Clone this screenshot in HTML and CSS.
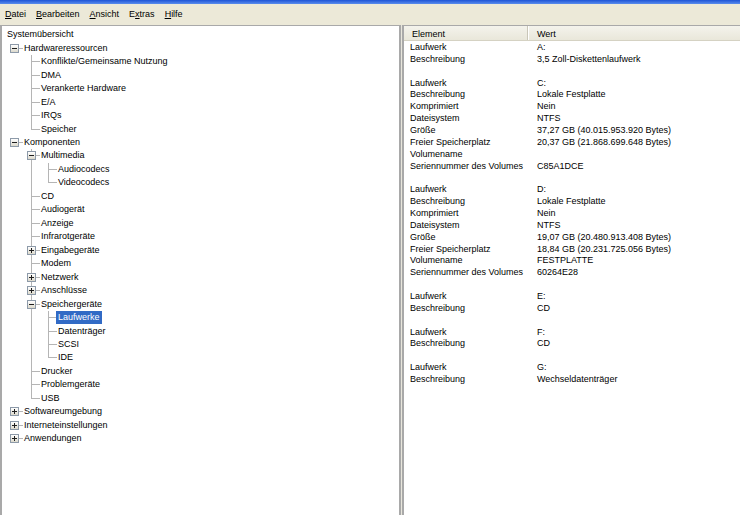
FILE: index.html
```html
<!DOCTYPE html>
<html lang="de">
<head>
<meta charset="utf-8">
<title>Systeminformationen</title>
<link rel="stylesheet" href="styles.css">
</head>
<body>
<div class="titlebar"></div>
<div class="menubar">
  <span class="mi"><u>D</u>atei</span>
  <span class="mi"><u>B</u>earbeiten</span>
  <span class="mi"><u>A</u>nsicht</span>
  <span class="mi">E<u>x</u>tras</span>
  <span class="mi"><u>H</u>ilfe</span>
</div>
<div class="main">
  <div class="tree">
    <div class="row root"><span class="label">Systemübersicht</span></div>
    <div class="row"><span class="g box"><i class="btn minus"></i></span><span class="label">Hardwareressourcen</span></div>
    <div class="row"><span class="g"></span><span class="g t"></span><span class="label">Konflikte/Gemeinsame Nutzung</span></div>
    <div class="row"><span class="g"></span><span class="g t"></span><span class="label">DMA</span></div>
    <div class="row"><span class="g"></span><span class="g t"></span><span class="label">Verankerte Hardware</span></div>
    <div class="row"><span class="g"></span><span class="g t"></span><span class="label">E/A</span></div>
    <div class="row"><span class="g"></span><span class="g t"></span><span class="label">IRQs</span></div>
    <div class="row"><span class="g"></span><span class="g l"></span><span class="label">Speicher</span></div>
    <div class="row"><span class="g box"><i class="btn minus"></i></span><span class="label">Komponenten</span></div>
    <div class="row"><span class="g"></span><span class="g t box"><i class="btn minus"></i></span><span class="label">Multimedia</span></div>
    <div class="row"><span class="g"></span><span class="g v"></span><span class="g t"></span><span class="label">Audiocodecs</span></div>
    <div class="row"><span class="g"></span><span class="g v"></span><span class="g l"></span><span class="label">Videocodecs</span></div>
    <div class="row"><span class="g"></span><span class="g t"></span><span class="label">CD</span></div>
    <div class="row"><span class="g"></span><span class="g t"></span><span class="label">Audiogerät</span></div>
    <div class="row"><span class="g"></span><span class="g t"></span><span class="label">Anzeige</span></div>
    <div class="row"><span class="g"></span><span class="g t"></span><span class="label">Infrarotgeräte</span></div>
    <div class="row"><span class="g"></span><span class="g t box"><i class="btn plus"></i></span><span class="label">Eingabegeräte</span></div>
    <div class="row"><span class="g"></span><span class="g t"></span><span class="label">Modem</span></div>
    <div class="row"><span class="g"></span><span class="g t box"><i class="btn plus"></i></span><span class="label">Netzwerk</span></div>
    <div class="row"><span class="g"></span><span class="g t box"><i class="btn plus"></i></span><span class="label">Anschlüsse</span></div>
    <div class="row"><span class="g"></span><span class="g t box"><i class="btn minus"></i></span><span class="label">Speichergeräte</span></div>
    <div class="row"><span class="g"></span><span class="g v"></span><span class="g t"></span><span class="label selected">Laufwerke</span></div>
    <div class="row"><span class="g"></span><span class="g v"></span><span class="g t"></span><span class="label">Datenträger</span></div>
    <div class="row"><span class="g"></span><span class="g v"></span><span class="g t"></span><span class="label">SCSI</span></div>
    <div class="row"><span class="g"></span><span class="g v"></span><span class="g l"></span><span class="label">IDE</span></div>
    <div class="row"><span class="g"></span><span class="g t"></span><span class="label">Drucker</span></div>
    <div class="row"><span class="g"></span><span class="g t"></span><span class="label">Problemgeräte</span></div>
    <div class="row"><span class="g"></span><span class="g l"></span><span class="label">USB</span></div>
    <div class="row"><span class="g box"><i class="btn plus"></i></span><span class="label">Softwareumgebung</span></div>
    <div class="row"><span class="g box"><i class="btn plus"></i></span><span class="label">Interneteinstellungen</span></div>
    <div class="row"><span class="g box"><i class="btn plus"></i></span><span class="label">Anwendungen</span></div>
  </div>
  <div class="split"></div>
  <div class="list">
    <div class="head"><div class="hc c1">Element</div><div class="hc c2">Wert</div></div>
    <div class="rows">
      <div class="r"><span>Laufwerk</span><span>A:</span></div>
      <div class="r"><span>Beschreibung</span><span>3,5 Zoll-Diskettenlaufwerk</span></div>
      <div class="r"></div>
      <div class="r"><span>Laufwerk</span><span>C:</span></div>
      <div class="r"><span>Beschreibung</span><span>Lokale Festplatte</span></div>
      <div class="r"><span>Komprimiert</span><span>Nein</span></div>
      <div class="r"><span>Dateisystem</span><span>NTFS</span></div>
      <div class="r"><span>Größe</span><span>37,27 GB (40.015.953.920 Bytes)</span></div>
      <div class="r"><span>Freier Speicherplatz</span><span>20,37 GB (21.868.699.648 Bytes)</span></div>
      <div class="r"><span>Volumename</span><span></span></div>
      <div class="r"><span>Seriennummer des Volumes</span><span>C85A1DCE</span></div>
      <div class="r"></div>
      <div class="r"><span>Laufwerk</span><span>D:</span></div>
      <div class="r"><span>Beschreibung</span><span>Lokale Festplatte</span></div>
      <div class="r"><span>Komprimiert</span><span>Nein</span></div>
      <div class="r"><span>Dateisystem</span><span>NTFS</span></div>
      <div class="r"><span>Größe</span><span>19,07 GB (20.480.913.408 Bytes)</span></div>
      <div class="r"><span>Freier Speicherplatz</span><span>18,84 GB (20.231.725.056 Bytes)</span></div>
      <div class="r"><span>Volumename</span><span>FESTPLATTE</span></div>
      <div class="r"><span>Seriennummer des Volumes</span><span>60264E28</span></div>
      <div class="r"></div>
      <div class="r"><span>Laufwerk</span><span>E:</span></div>
      <div class="r"><span>Beschreibung</span><span>CD</span></div>
      <div class="r"></div>
      <div class="r"><span>Laufwerk</span><span>F:</span></div>
      <div class="r"><span>Beschreibung</span><span>CD</span></div>
      <div class="r"></div>
      <div class="r"><span>Laufwerk</span><span>G:</span></div>
      <div class="r"><span>Beschreibung</span><span>Wechseldatenträger</span></div>
    </div>
  </div>
</div>
</body>
</html>
```
FILE: styles.css
```css
* { box-sizing: border-box; }
html, body { margin: 0; padding: 0; }
body {
  width: 740px;
  height: 515px;
  overflow: hidden;
  background: #ece9d8;
  font-family: "Liberation Sans", Arial, sans-serif;
  font-size: 9px;
  color: #000;
}
.titlebar {
  height: 4px;
  background: linear-gradient(#1d54d6, #5a8ded);
}
.menubar {
  height: 21px;
  display: flex;
  align-items: center;
  gap: 10px;
  padding-left: 5px;
  padding-bottom: 1px;
  background: #ece9d8;
}
.mi u { text-decoration: underline; text-underline-offset: 1px; }
.main {
  display: flex;
  height: 490px;
}
.tree {
  width: 401px;
  flex: none;
  background: #fff;
  border-left: 2px solid #a9a9a9;
  border-top: 1px solid #a9a9a9;
  border-right: 2px solid #a9a9a9;
  padding-left: 4px;
  padding-top: 2px;
}
.split {
  width: 1px;
  flex: none;
  background: #e8e6dc;
}
.list {
  flex: 1;
  background: #fff;
  border-left: 2px solid #a9a9a9;
  border-top: 1px solid #a9a9a9;
}
.row {
  display: flex;
  align-items: center;
  height: 13.47px;
  white-space: nowrap;
}
.label {
  margin-left: -1px;
  padding: 0 2px;
  line-height: 13px;
  height: 13px;
}
.label.selected {
  background: #316ac5;
  color: #fff;
}
.g {
  --ln: #b5b5b5;
  flex: none;
  width: 17px;
  height: 100%;
  display: flex;
  align-items: center;
  padding-left: 4px;
}
.g.v {
  background: linear-gradient(var(--ln), var(--ln)) 8px 0 / 1px 100% no-repeat;
}
.g.t {
  background:
    linear-gradient(var(--ln), var(--ln)) 8px 0 / 1px 100% no-repeat,
    linear-gradient(var(--ln), var(--ln)) 8px 50% / 9px 1px no-repeat;
}
.g.l {
  background:
    linear-gradient(var(--ln), var(--ln)) 8px 0 / 1px 50% no-repeat,
    linear-gradient(var(--ln), var(--ln)) 8px 50% / 9px 1px no-repeat;
}
.g.box:not(.t) {
  background: linear-gradient(var(--ln), var(--ln)) 8px 50% / 9px 1px no-repeat;
}
.btn {
  display: block;
  width: 9px;
  height: 9px;
  border: 1px solid #8d9aa9;
}
.btn.minus {
  background:
    linear-gradient(#1e1e1e, #1e1e1e) 50% 50% / 5px 1px no-repeat,
    linear-gradient(#ffffff, #dcd9cc);
}
.btn.plus {
  background:
    linear-gradient(#1e1e1e, #1e1e1e) 50% 50% / 5px 1px no-repeat,
    linear-gradient(#1e1e1e, #1e1e1e) 50% 50% / 1px 5px no-repeat,
    linear-gradient(#ffffff, #dcd9cc);
}
.root .label { margin-left: -1px; }
.head {
  display: flex;
  height: 15px;
  background: linear-gradient(#f4f3ec, #e9e7da);
  border-bottom: 1px solid #d5d2c3;
}
.hc {
  display: flex;
  align-items: center;
  padding-left: 8px;
  padding-top: 2px;
}
.c1 {
  width: 124px;
  border-right: 1px solid #c9c6b8;
  box-shadow: 1px 0 0 #fff;
}
.c2 { padding-left: 9px; }
.rows { padding-left: 6px; padding-top: 1px; }
.r {
  display: grid;
  grid-template-columns: 127px 1fr;
  height: 11.86px;
  line-height: 11.86px;
  white-space: nowrap;
}
```
